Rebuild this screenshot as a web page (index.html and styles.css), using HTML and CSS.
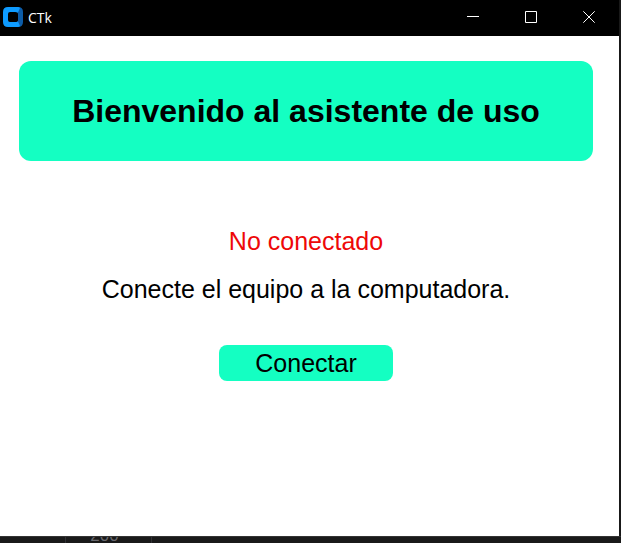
FILE: index.html
```html
<!DOCTYPE html>
<html lang="es">
<head>
<meta charset="utf-8">
<title>CTk</title>
<link rel="stylesheet" href="styles.css">
</head>
<body>
<div class="window">
  <header class="titlebar">
    <svg class="logo" viewBox="0 0 20 20" aria-hidden="true">
      <path fill="#0c5ca8" d="M14 0H15Q20 0 20 5V15Q20 20 15 20H13L12 15Q15 15 15 13V7Q15 5 12 5Z"/>
      <path fill="#0e9bff" d="M5 0H15Q16 0 17 1L15 5.500Q14 5 13 5H7Q5 5 5 7V13Q5 15 7 15H13Q14 15 15 14.500L17 19Q16 20 15 20H5Q0 20 0 15V5Q0 0 5 0Z"/>
    </svg>
    <span class="name">CTk</span>
    <button class="control" type="button" aria-label="Minimizar">
      <svg viewBox="0 0 12 12"><path d="M0 5.5H12"/></svg>
    </button>
    <button class="control" type="button" aria-label="Maximizar">
      <svg viewBox="0 0 12 12"><path d="M.5 .5H11.500V11.500H.5Z"/></svg>
    </button>
    <button class="control" type="button" aria-label="Cerrar">
      <svg viewBox="0 0 12 12"><path d="M.3 .3L11.700 11.700M11.700 .3L.3 11.700"/></svg>
    </button>
  </header>
  <main class="content">
    <h1 class="banner">Bienvenido al asistente de uso</h1>
    <p class="status">No conectado</p>
    <p class="hint">Conecte el equipo a la computadora.</p>
    <button class="connect" type="button">Conectar</button>
  </main>
</div>
<footer class="backdrop"><span class="cell">200</span></footer>
</body>
</html>
```
FILE: styles.css
```css
* {
  box-sizing: border-box;
}

body {
  display: flex;
  flex-direction: column;
  min-height: 100vh;
  margin: 0;
  background: #191919;
  color: #000;
  font-family: "Liberation Sans", Arial, sans-serif;
}

.window {
  display: flex;
  flex: 1;
  flex-direction: column;
  margin-right: 2px;
  background: #fff;
}

.titlebar {
  display: flex;
  align-items: center;
  height: 36px;
  padding: 0 1px 2px 3px;
  background: #000;
  color: #fff;
}

.logo {
  width: 20px;
  height: 20px;
}

.name {
  flex: 1;
  margin-left: 5px;
  font: 14px "Open Sans", "Noto Sans", sans-serif;
}

.control {
  display: grid;
  place-items: center;
  width: 58px;
  height: 34px;
  padding: 0;
  border: 0;
  background: none;
}

.control svg {
  width: 12px;
  height: 12px;
  fill: none;
  stroke: #fff;
}

.content {
  display: flex;
  flex: 1;
  flex-direction: column;
  align-items: center;
  padding: 25px 26px 0 19px;
  font-size: 25px;
  line-height: 28px;
}

.banner {
  width: 100%;
  margin: 0 0 66px;
  padding: 32px 0;
  border-radius: 12px;
  background: #14ffc2;
  font-size: 32px;
  line-height: 36px;
  text-align: center;
}

.status,
.hint {
  margin: 0 0 20px;
}

.status {
  color: #ee0808;
}

.hint {
  margin-bottom: 42px;
}

.connect {
  width: 174px;
  height: 36px;
  padding: 0;
  border: 0;
  border-radius: 8px;
  background: #14ffc2;
  color: #000;
  font: inherit;
}

.backdrop {
  display: flex;
  height: 7px;
  overflow: hidden;
  border-top: 1px solid #333;
}

.cell {
  display: flex;
  align-items: flex-end;
  justify-content: center;
  width: 87px;
  height: 7px;
  margin-left: 65px;
  padding-right: 8px;
  border: solid #303033;
  border-width: 0 1px;
  color: #68686e;
  font-size: 17px;
  line-height: 16px;
}
```
